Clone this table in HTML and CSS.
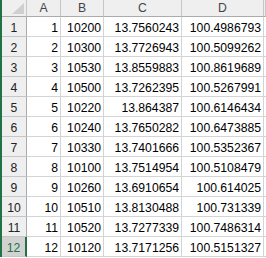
FILE: index.html
```html
<!doctype html>
<html lang="en">
	<head>
		<meta charset="UTF-8" />
		<title>Sheet1</title>
		<link rel="stylesheet" href="styles.css">
	</head>
	<body>
		<div class="sheet">
			<div class="corner"><span class="tri"></span></div>
			<div class="col">A</div>
			<div class="col">B</div>
			<div class="col">C</div>
			<div class="col">D</div>
			<div class="col"></div>

			<div class="rh">1</div><div class="c">1</div><div class="c">10200</div><div class="c">13.7560243</div><div class="c">100.4986793</div><div class="c"></div>
			<div class="rh">2</div><div class="c">2</div><div class="c">10300</div><div class="c">13.7726943</div><div class="c">100.5099262</div><div class="c"></div>
			<div class="rh">3</div><div class="c">3</div><div class="c">10530</div><div class="c">13.8559883</div><div class="c">100.8619689</div><div class="c"></div>
			<div class="rh">4</div><div class="c">4</div><div class="c">10500</div><div class="c">13.7262395</div><div class="c">100.5267991</div><div class="c"></div>
			<div class="rh">5</div><div class="c">5</div><div class="c">10220</div><div class="c">13.864387</div><div class="c">100.6146434</div><div class="c"></div>
			<div class="rh">6</div><div class="c">6</div><div class="c">10240</div><div class="c">13.7650282</div><div class="c">100.6473885</div><div class="c"></div>
			<div class="rh">7</div><div class="c">7</div><div class="c">10330</div><div class="c">13.7401666</div><div class="c">100.5352367</div><div class="c"></div>
			<div class="rh">8</div><div class="c">8</div><div class="c">10100</div><div class="c">13.7514954</div><div class="c">100.5108479</div><div class="c"></div>
			<div class="rh">9</div><div class="c">9</div><div class="c">10260</div><div class="c">13.6910654</div><div class="c">100.614025</div><div class="c"></div>
			<div class="rh">10</div><div class="c">10</div><div class="c">10510</div><div class="c">13.8130488</div><div class="c">100.731339</div><div class="c"></div>
			<div class="rh">11</div><div class="c">11</div><div class="c">10520</div><div class="c">13.7277339</div><div class="c">100.7486314</div><div class="c"></div>
			<div class="rh sel">12</div><div class="c">12</div><div class="c">10120</div><div class="c">13.7171256</div><div class="c">100.5151327</div><div class="c"></div>
		</div>
	</body>
</html>
```

FILE: styles.css
```css
body {
	margin: 0;
	background: #fff;
	font-family: "Liberation Sans", Arial, sans-serif;
	font-size: 12.2px;
	color: #000;
	overflow: hidden;
}
.sheet {
	display: grid;
	grid-template-columns: 25px 34px 43px 78px 82px minmax(0, 1fr);
	grid-template-rows: 17px;
	grid-auto-rows: 20px;
	border-left: 2px solid #217346;
}
.sheet > div {
	box-sizing: border-box;
	white-space: nowrap;
	overflow: hidden;
	line-height: 14px;
}
.corner, .col {
	background: #efefef;
	border-right: 1px solid #c6c6c6;
	border-bottom: 1px solid #ababab;
	padding-top: 1px;
	text-align: center;
	color: #444;
}
.corner {
	position: relative;
}
.tri {
	position: absolute;
	right: 2px;
	bottom: 2px;
	width: 0;
	height: 0;
	border-left: 12px solid transparent;
	border-bottom: 11px solid #cfcfcf;
}
.rh {
	background: #efefef;
	border-right: 1px solid #ababab;
	border-bottom: 1px solid #c6c6c6;
	padding-top: 4px;
	text-align: center;
	color: #222;
}
.rh.sel {
	background: #d2d2d2;
	color: #217346;
	border-right: 2px solid #217346;
}
.c {
	border-right: 1px solid #d4d4d4;
	border-bottom: 1px solid #d4d4d4;
	padding: 4px 2px 0 0;
	text-align: right;
}
```
